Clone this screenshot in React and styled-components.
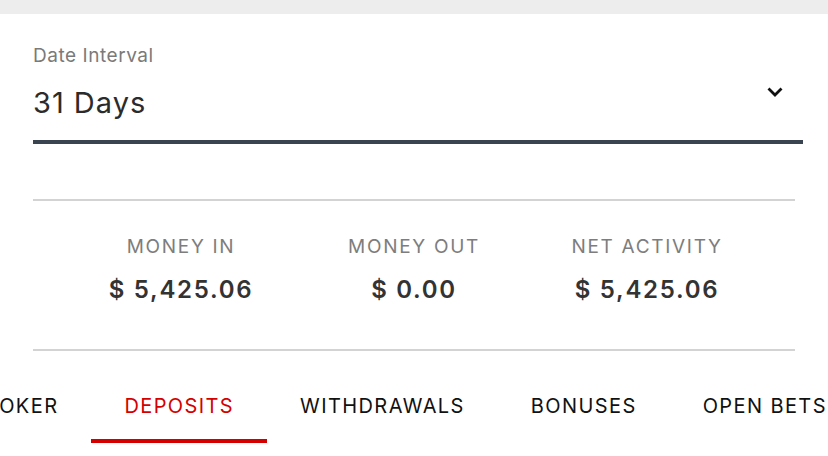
import React from "react";
import styled, { createGlobalStyle } from "styled-components";

const Global = createGlobalStyle`
  html, body { margin: 0; padding: 0; background: #fff; }
  body { font-family: Inter, Roboto, "Liberation Sans", sans-serif; width: 828px; height: 456px; overflow: hidden; }
`;

const TopBar = styled.div`
  height: 14px;
  background: #ededed;
`;

const Content = styled.div`
  padding: 0 33px;
`;

const Field = styled.div`
  padding-top: 31px;
  padding-bottom: 17px;
  border-bottom: 4px solid #3a4450;
  margin-right: -8px;
`;

const FieldLabel = styled.div`
  font-size: 19px;
  line-height: 22px;
  letter-spacing: 0.55px;
  color: #7a7a7a;
`;

const SelectRow = styled.div`
  display: flex;
  align-items: flex-start;
  justify-content: space-between;
  margin-top: 16px;
`;

const SelectValue = styled.div`
  font-size: 29px;
  line-height: 40px;
  letter-spacing: 1px;
  color: #2b2b2b;
`;

const Chevron = styled.svg`
  width: 18px;
  height: 12px;
  margin-top: 3px;
  margin-right: 19px;
`;

const Stats = styled.div`
  margin-top: 55px;
  border-top: 2px solid #d3d3d3;
  border-bottom: 2px solid #d3d3d3;
  height: 152px;
  box-sizing: border-box;
  display: flex;
  justify-content: center;
  padding-top: 34px;
`;

const Stat = styled.div`
  width: 233px;
  display: flex;
  flex-direction: column;
  align-items: center;
`;

const StatLabel = styled.div`
  font-size: 19px;
  line-height: 24px;
  letter-spacing: 1.7px;
  color: #7d7d7d;
`;

const StatValue = styled.div`
  margin-top: 17px;
  font-size: 24px;
  line-height: 28px;
  letter-spacing: 1.7px;
  font-weight: 600;
  color: #333;
`;

const TabStrip = styled.div`
  overflow: hidden;
`;

const TabRow = styled.div`
  display: flex;
  margin-left: -48px;
  white-space: nowrap;
`;

const Tab = styled.div`
  flex: none;
  padding: 43px 33px 21px;
  font-size: 20px;
  line-height: 24px;
  letter-spacing: 1.4px;
  color: ${(p) => (p.$active ? "#d40000" : "#111")};
  border-bottom: 4px solid ${(p) => (p.$active ? "#d40000" : "transparent")};
`;

const stats = [
  { label: "MONEY IN", value: "$ 5,425.06" },
  { label: "MONEY OUT", value: "$ 0.00" },
  { label: "NET ACTIVITY", value: "$ 5,425.06" },
];

const tabs = ["POKER", "DEPOSITS", "WITHDRAWALS", "BONUSES", "OPEN BETS"];

export default function App() {
  return (
    <>
      <Global />
      <TopBar />
      <Content>
        <Field>
          <FieldLabel>Date Interval</FieldLabel>
          <SelectRow>
            <SelectValue>31 Days</SelectValue>
            <Chevron viewBox="0 0 18 12">
              <path d="M2.5 2.5 L9 9 L15.5 2.5" fill="none" stroke="#111" strokeWidth="2.8" />
            </Chevron>
          </SelectRow>
        </Field>
        <Stats>
          {stats.map((s) => (
            <Stat key={s.label}>
              <StatLabel>{s.label}</StatLabel>
              <StatValue>{s.value}</StatValue>
            </Stat>
          ))}
        </Stats>
      </Content>
      <TabStrip>
        <TabRow>
          {tabs.map((t) => (
            <Tab key={t} $active={t === "DEPOSITS"}>{t}</Tab>
          ))}
        </TabRow>
      </TabStrip>
    </>
  );
}
